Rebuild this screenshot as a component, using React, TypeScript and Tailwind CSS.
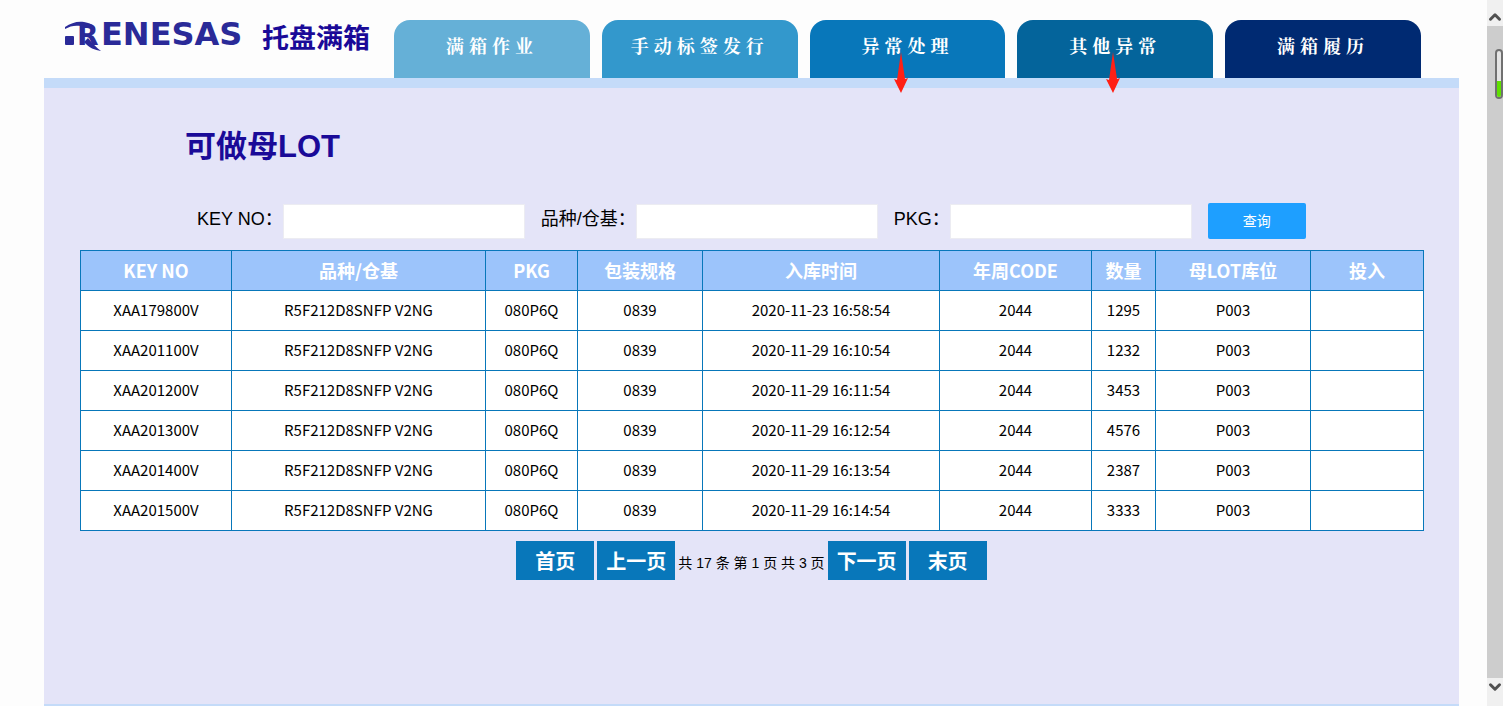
import clsx from 'clsx';
import { ChevronDown, ChevronUp } from 'lucide-react';

const tabs = [
  { name: '满箱作业', color: 'bg-[#65b0d7]' },
  { name: '手动标签发行', color: 'bg-[#3398cc]' },
  { name: '异常处理', color: 'bg-[#0877ba]', arrow: 'right-24 top-8' },
  { name: '其他异常', color: 'bg-[#04649b]', arrow: 'right-23 top-8' },
  { name: '满箱履历', color: 'bg-[#002a72]' },
];

const columns = [
  { title: 'KEY NO', width: 'w-[151px]' },
  { title: '品种/仓基', width: 'w-[254px]' },
  { title: 'PKG', width: 'w-[92px]' },
  { title: '包装规格', width: 'w-[125px]' },
  { title: '入库时间', width: 'w-[237px]' },
  { title: '年周CODE', width: 'w-[152px]' },
  { title: '数量', width: 'w-[64px]' },
  { title: '母LOT库位', width: 'w-[155px]' },
  { title: '投入', width: 'w-[113px]' },
];

const rows = [
  ['XAA179800V', '2020-11-23 16:58:54', '1295'],
  ['XAA201100V', '2020-11-29 16:10:54', '1232'],
  ['XAA201200V', '2020-11-29 16:11:54', '3453'],
  ['XAA201300V', '2020-11-29 16:12:54', '4576'],
  ['XAA201400V', '2020-11-29 16:13:54', '2387'],
  ['XAA201500V', '2020-11-29 16:14:54', '3333'],
].map(([key, time, count]) => [key, 'R5F212D8SNFP V2NG', '080P6Q', '0839', time, '2044', count, 'P003', '']);

const fields = [
  { id: 'keyNo', label: 'KEY NO：' },
  { id: 'product', label: '品种/仓基：' },
  { id: 'pkg', label: 'PKG：' },
];

function Logo() {
  return (
    <svg width="180" height="32" viewBox="0 0 180 32" className="shrink-0 overflow-visible" role="img" aria-label="RENESAS">
      <g fill="#2a2a98" fontFamily="'DejaVu Sans', sans-serif" fontWeight="700">
        {/* swoosh, block and tail around the R */}
        <path d="M1 6C7 2 13 0 20 1C26 2 30 4 31 8L24 7L17 5C11 4 6 5 1 8Z" />
        <rect x="1" y="15" width="9" height="9" rx="1" />
        <path d="M24 17C28 22 33 27 37 30C31 29 25 27 20 21Z" />
        <text x="13" y="24" fontSize="28">R</text>
        <text x="37" y="24" fontSize="32">ENESAS</text>
      </g>
    </svg>
  );
}

function RedArrow({ className }: { className: string }) {
  return (
    <svg width="16" height="42" viewBox="0 0 16 42" className={clsx('absolute z-10', className)} aria-hidden="true">
      <path d="M8 0L12 27L15 26L8 41L1 27L4 28Z" fill="#ff2015" />
    </svg>
  );
}

function PageButton({ children }: { children: string }) {
  return (
    <button type="button" className="h-[39px] w-[78px] bg-[#0877ba] pt-0.5 text-xl font-bold text-white">
      {children}
    </button>
  );
}

export default function App() {
  return (
    <div lang="zh-CN" className="flex min-h-screen bg-[#fdfdfd] font-['Liberation_Sans','Noto_Sans_CJK_SC',sans-serif] text-black">
      <div className="ml-11 mr-7 flex min-w-0 flex-1 flex-col">
        <header className="flex h-[78px] items-end pl-5 pr-[38px]">
          <div className="flex h-full shrink-0 items-start gap-[18px] pt-[21px]">
            <Logo />
            <span className="w-[132px] text-[27px] leading-9 font-bold whitespace-nowrap text-[#1a0a98]">托盘满箱</span>
          </div>
          <nav className="flex min-w-0 flex-1 gap-3">
            {tabs.map((tab) => (
              <a
                key={tab.name}
                href="#"
                className={clsx(
                  "relative flex h-[58px] flex-1 items-center justify-center rounded-t-2xl pb-2 font-['Noto_Serif_CJK_SC','Noto_Sans_CJK_SC',serif] text-lg font-bold tracking-[5px] whitespace-nowrap text-white",
                  tab.color
                )}
              >
                {tab.name}
                {tab.arrow && <RedArrow className={tab.arrow} />}
              </a>
            ))}
          </nav>
        </header>

        <main className="flex-1 border-t-10 border-b-2 border-[#c4dbf9] bg-[#e4e4f8] px-9">
          <h1 className="mt-[37px] ml-[105px] text-[31px] leading-[44px] font-bold text-[#1a0a98]">可做母LOT</h1>

          <form className="mt-8 ml-[117px] flex h-10 items-center gap-4" onSubmit={(e) => e.preventDefault()}>
            {fields.map((field) => (
              <div key={field.id} className="flex items-center">
                <label htmlFor={field.id} className="pb-1 text-lg whitespace-nowrap">{field.label}</label>
                <input id={field.id} type="text" className="h-[35px] w-[242px] border border-[#ececf2] bg-white px-2" />
              </div>
            ))}
            <button type="submit" className="h-9 w-[98px] rounded-xs bg-[#1e9fff] text-sm text-white">查询</button>
          </form>

          <table className="mt-[9px] w-full table-fixed border-collapse bg-white text-center font-['Noto_Sans_CJK_SC',sans-serif]">
            <thead>
              <tr className="h-10 bg-[#9cc4fb] text-lg leading-6 text-white">
                {columns.map((col) => (
                  <th key={col.title} className={clsx('border border-[#0877ba] pb-0.5 font-bold', col.width)}>{col.title}</th>
                ))}
              </tr>
            </thead>
            <tbody>
              {rows.map((row) => (
                <tr key={row[0]} className="h-10 text-[15px] leading-6">
                  {row.map((cell, i) => (
                    <td key={i} className="border border-[#0877ba] pb-0.5">{cell}</td>
                  ))}
                </tr>
              ))}
            </tbody>
          </table>

          <div className="mt-2.5 flex items-center justify-center gap-[3px]">
            <PageButton>首页</PageButton>
            <PageButton>上一页</PageButton>
            <span className="pt-1 text-sm whitespace-nowrap">共 17 条 第 1 页 共 3 页</span>
            <PageButton>下一页</PageButton>
            <PageButton>末页</PageButton>
          </div>
        </main>
      </div>

      {/* scroll rail */}
      <aside className="relative flex w-4 shrink-0 flex-col bg-[#f0f0f0] text-[#505050]">
        <div className="flex h-[26px] items-end justify-center">
          <ChevronUp size={18} strokeWidth={4} className="shrink-0" />
        </div>
        <div className="flex-1 bg-[#cdcdcd]" />
        <div className="flex h-7 items-start justify-center">
          <ChevronDown size={18} strokeWidth={4} className="shrink-0" />
        </div>
        <div className="absolute right-0 top-[49px] flex h-[50px] w-2 flex-col justify-end rounded-full border-2 border-[#707070] bg-[#e4e4e4]">
          <div className="h-4 rounded-b-full bg-[#5fe000]" />
        </div>
      </aside>
    </div>
  );
}
